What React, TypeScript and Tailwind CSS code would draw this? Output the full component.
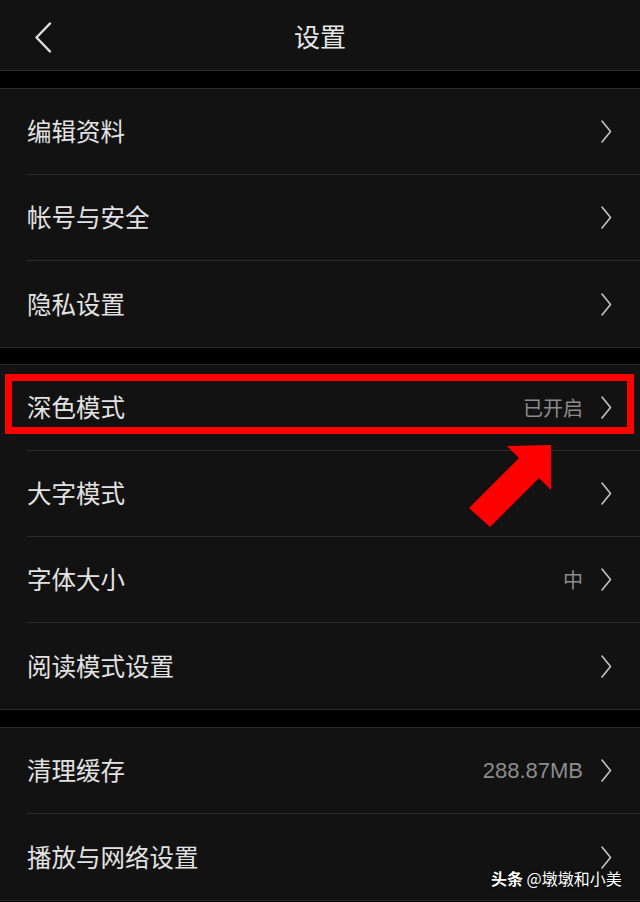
import { Fragment } from "react";

type Row = { label: string; value?: string };

const groups: Row[][] = [
  [{ label: "编辑资料" }, { label: "帐号与安全" }, { label: "隐私设置" }],
  [
    { label: "深色模式", value: "已开启" },
    { label: "大字模式" },
    { label: "字体大小", value: "中" },
    { label: "阅读模式设置" },
  ],
  [{ label: "清理缓存", value: "288.87MB" }, { label: "播放与网络设置" }],
];

function Chevron() {
  return (
    <svg width="11" height="23" viewBox="0 0 11 23" fill="none" className="shrink-0">
      <path d="M1 1 L9.5 11.5 L1 22" stroke="#c4c4c4" strokeWidth="1.6" strokeLinejoin="round" strokeLinecap="round" />
    </svg>
  );
}

function SettingRow({ row, last }: { row: Row; last: boolean }) {
  // latin values (cache size) render a bit larger than the CJK ones
  const latin = row.value && /^[0-9.A-Z]+$/.test(row.value);
  return (
    <div className="flex h-[86px] pl-[27px]">
      <div
        className={
          "flex flex-1 items-center pr-[28px] " +
          (last ? "" : "border-b border-[#2a2a2a]")
        }
      >
        <span className="flex-1 text-[24.5px] text-[#e2e2e2]">{row.label}</span>
        {row.value && (
          <span
            className={
              "mr-[18px] text-[#8c8c8c] " +
              (latin
                ? "font-['Liberation_Sans',sans-serif] text-[22px]"
                : "text-[20px]")
            }
          >
            {row.value}
          </span>
        )}
        <Chevron />
      </div>
    </div>
  );
}

export default function App() {
  return (
    <div className="relative h-[902px] w-[640px] overflow-hidden bg-black font-['Noto_Sans_CJK_SC',sans-serif]">
      {/* header */}
      <div className="relative flex h-[71px] items-center justify-center border-b border-[#2a2a2a] bg-[#121212]">
        <svg
          width="18"
          height="31"
          viewBox="0 0 18 31"
          fill="none"
          className="absolute left-[34px] top-[22px]"
        >
          <path d="M16 1.5 L2.5 15.5 L16 29.5" stroke="#e0e0e0" strokeWidth="2.4" strokeLinecap="round" strokeLinejoin="round" />
        </svg>
        <span className="text-[26px] text-[#e6e6e6]">设置</span>
      </div>

      {groups.map((group, gi) => (
        <Fragment key={gi}>
          <div className={gi === 1 ? "h-[16px]" : "h-[17px]"} />
          <div className="border-y border-[#2a2a2a] bg-[#121212]">
            {group.map((row, ri) => (
              <SettingRow key={row.label} row={row} last={ri === group.length - 1} />
            ))}
          </div>
        </Fragment>
      ))}

      {/* annotation: red box + arrow */}
      <div className="absolute left-[5px] top-[374px] h-[60px] w-[629px] border-[7px] border-[#ff0000]" />
      <svg
        width="640"
        height="902"
        viewBox="0 0 640 902"
        className="pointer-events-none absolute left-0 top-0"
      >
        <polygon
          points="551,445 551,490 539,478 490,527 469,508 519,458 507,446"
          fill="#ff0000"
        />
      </svg>

      {/* watermark */}
      <div className="absolute left-[491px] top-[866px] text-[16px] text-white [text-shadow:0_0_3px_rgba(0,0,0,0.9)]">
        <span className="font-bold">头条</span> @墩墩和小美
      </div>
    </div>
  );
}
